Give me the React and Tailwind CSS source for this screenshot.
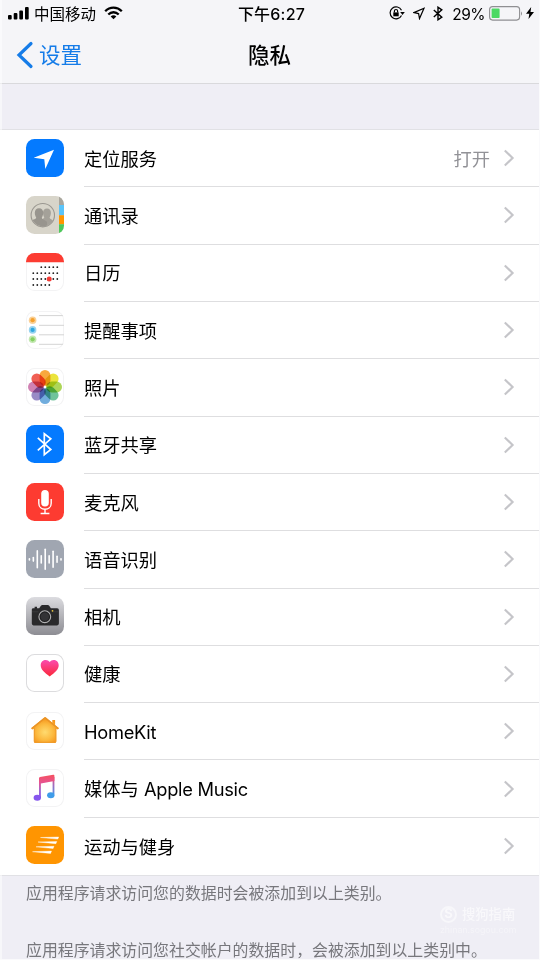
import React from "react";

function Tile({ className = "", children }) {
  return (
    <span className={`mb-0.5 block h-[38px] w-[38px] shrink-0 overflow-hidden rounded-[8.5px] ${className}`}>
      <svg viewBox="0 0 38 38" className="block h-full w-full">
        {children}
      </svg>
    </span>
  );
}

const WHITE_TILE = "bg-white shadow-[inset_0_0_0_1px_#f3f3f4]";

function LocationIcon() {
  return (
    <Tile className="bg-[#047aff]">
      <path d="M28 10.8 19.300 30 18.300 20.200 7.700 18.800Z" fill="#fff" />
    </Tile>
  );
}

function ContactsIcon() {
  return (
    <Tile className="bg-[#d8d5ca]">
      <defs>
        <clipPath id="avatar">
          <circle cx="16.800" cy="19.200" r="11.200" />
        </clipPath>
      </defs>
      <path d="M33 0h5v9h-5z" fill="#a9a69d" />
      <path d="M33 9h5v10.3h-5z" fill="#5ac4fa" />
      <path d="M33 19.3h5v9h-5z" fill="#ff9500" />
      <path d="M33 28.3h5V38h-5z" fill="#4cc95b" />
      <g clipPath="url(#avatar)">
        <path
          d="M21 12.500c2.700 0 4 1.800 3.900 4.500-.1 2-.6 3.200-1.300 4.400 0 2 3.500 2 5.400 4.600v6H16v-8l2.300-2.600c-.7-1.200-1.200-2.400-1.300-4.400-.1-2.700 1.300-4.500 4-4.500Z"
          fill="#a4a199"
        />
        <path
          d="M13 12.200c2.800 0 4.300 1.900 4.200 4.800-.1 2-.7 3.400-1.400 4.600 0 2.200 3.700 2.300 5.200 4.400v6H3v-6c1.700-2.300 7.200-2.200 7.200-4.400-.7-1.200-1.300-2.600-1.400-4.600-.1-2.900 1.400-4.800 4.200-4.800Z"
          fill="#98958e"
        />
      </g>
      <circle cx="16.800" cy="19.200" r="11.700" fill="none" stroke="#9b9891" strokeWidth="1.100" />
    </Tile>
  );
}

const CALENDAR_ROWS = [
  { y: 14.2, from: 2, to: 6 },
  { y: 20.2, from: 0, to: 6 },
  { y: 26, from: 0, to: 6 },
  { y: 32, from: 0, to: 4 },
];

function CalendarIcon() {
  return (
    <Tile className={WHITE_TILE}>
      <path d="M0 0h38v9.300H0z" fill="#fc3c32" />
      {CALENDAR_ROWS.map(({ y, from, to }) =>
        Array.from({ length: to - from + 1 }, (_, i) => (
          <circle key={`${y}_${i}`} cx={7.3 + (from + i) * 4} cy={y} r="0.9" fill="#222" />
        )),
      )}
      <circle cx="23.2" cy="26" r="2.500" fill="#f53b35" />
    </Tile>
  );
}

function RemindersIcon() {
  return (
    <Tile className={WHITE_TILE}>
      {[4.6, 14.3, 23.8, 33.3].map((y) => (
        <path key={y} d={`M13 ${y}H38`} stroke="#d4d4d4" strokeWidth="1" />
      ))}
      {[
        [9.2, "#f5a12e"],
        [18.9, "#30a7e0"],
        [28.3, "#85d060"],
      ].map(([y, color]) => (
        <g key={y} fill={color}>
          <circle cx="6.600" cy={y} r="3.800" opacity="0.5" />
          <circle cx="6.600" cy={y} r="2.100" />
        </g>
      ))}
    </Tile>
  );
}

const PETALS = ["#f79a1e", "#e8e01c", "#a0cf3c", "#58b98a", "#5a9fd8", "#8878bd", "#c96da6", "#ee4438"];

function PhotosIcon() {
  return (
    <Tile className={WHITE_TILE}>
      {PETALS.map((color, i) => (
        <rect
          key={color}
          x="13.600"
          y="2"
          width="10.800"
          height="15.800"
          rx="5.400"
          fill={color}
          opacity="0.86"
          transform={`rotate(${i * 45} 19 19)`}
          className="mix-blend-multiply"
        />
      ))}
      <circle cx="19" cy="19" r="1.200" fill="#fff" />
    </Tile>
  );
}

function BluetoothIcon() {
  return (
    <Tile className="bg-[#047aff]">
      <path d="m11.800 12.800 13 11.700-6.500 5.200V8.800l6.500 5-13 11.500" fill="none" stroke="#fff" strokeWidth="1.700" />
    </Tile>
  );
}

function MicIcon() {
  return (
    <Tile className="bg-[#fd3b31]">
      <rect x="15.200" y="7" width="7.600" height="16.500" rx="3.800" fill="#fff" />
      <path d="M12.800 16v4.300c0 8 12.400 8 12.400 0V16M19 26.500v4M14.600 30.500h8.800" fill="none" stroke="#fff" strokeWidth="1.400" />
    </Tile>
  );
}

const WAVE = [0.6, 1.8, 8.4, 3.6, 10, 3.6, 8, 3, 0.6];

function SpeechIcon() {
  return (
    <Tile className="bg-[#a0a6b1]">
      {WAVE.map((h, i) => (
        <path
          key={i}
          d={`M${3.4 + i * 3.95} ${19.3 - h}v${h * 2}`}
          stroke="#fff"
          strokeWidth="1.600"
          strokeLinecap="round"
        />
      ))}
    </Tile>
  );
}

function CameraIcon() {
  return (
    <Tile className="bg-linear-to-b from-[#dcdce0] to-[#8d8d93]">
      <path
        d="M6.800 11.200h1.800V9.800H11v1.400h2.200l1.700-2.400q.6-.8 1.500-.8h5.300q1 0 1.500.8l1.700 2.400h6.200q1.800 0 1.800 1.800v13.600q0 1.800-1.800 1.800H7.500q-1.700 0-1.700-1.800V12.400q0-1 1-1.200Z"
        fill="#29292b"
      />
      <path d="M6 14.800h6.500M26 14.800h6.500" stroke="#444447" strokeWidth="0.600" />
      <circle cx="18.800" cy="19.700" r="5.900" fill="#202022" stroke="#b0b0b2" strokeWidth="1.100" />
      <circle cx="18.800" cy="19.700" r="4.200" fill="#333336" />
      <circle cx="26.500" cy="13.800" r="0.900" fill="#e7c541" />
    </Tile>
  );
}

function HealthIcon() {
  return (
    <Tile className="bg-white shadow-[inset_0_0_0_1px_#dcdcde]">
      <defs>
        <linearGradient id="heart" x1="0" y1="0" x2="0" y2="1">
          <stop offset="0" stopColor="#fb4bb0" />
          <stop offset="1" stopColor="#fa2838" />
        </linearGradient>
      </defs>
      <path
        d="M23.700 22.400C18.500 18.600 14.700 15.400 14.700 11.200c0-5.400 6.600-7 9-3.100 2.400-3.900 9-2.300 9 3.100 0 4.200-3.800 7.400-9 11.200Z"
        fill="url(#heart)"
      />
    </Tile>
  );
}

function HomeIcon() {
  return (
    <Tile className={WHITE_TILE}>
      <defs>
        <radialGradient id="house" cx="0.5" cy="0.58" r="0.55">
          <stop offset="0" stopColor="#ffdb70" />
          <stop offset="0.55" stopColor="#fcba40" />
          <stop offset="1" stopColor="#f5931a" />
        </radialGradient>
      </defs>
      <path
        d="M18.200 5.600q.9-.7 1.800 0l6.300 5.200V8h2.800v5.200l3.700 3-.9 1.300-1.600-.7v12.700q0 1.500-1.500 1.500H9.300q-1.500 0-1.500-1.500V16.800l-1.700.7-.9-1.300Z"
        fill="url(#house)"
      />
      <path d="M5.700 16.700 19.100 5.900l13.300 10.800" fill="none" stroke="#ea9426" strokeWidth="1.500" />
      <path d="M8.400 16v13.100q0 1.200 1.200 1.200h19q1.200 0 1.200-1.200V16" fill="none" stroke="#ee9c2c" strokeWidth="1" />
    </Tile>
  );
}

function MusicIcon() {
  return (
    <Tile className={WHITE_TILE}>
      <defs>
        <linearGradient id="note" gradientUnits="userSpaceOnUse" x1="20" y1="6" x2="20" y2="32">
          <stop offset="0" stopColor="#f5515f" />
          <stop offset="0.28" stopColor="#e8538f" />
          <stop offset="0.6" stopColor="#9e68d4" />
          <stop offset="1" stopColor="#8b50ee" />
        </linearGradient>
        <linearGradient id="stem" gradientUnits="userSpaceOnUse" x1="20" y1="8" x2="20" y2="29">
          <stop offset="0" stopColor="#ec4f74" />
          <stop offset="0.4" stopColor="#a06cc0" />
          <stop offset="1" stopColor="#35a0ee" />
        </linearGradient>
      </defs>
      <path d="M26.600 8h1.800v17.500h-1.800z" fill="url(#stem)" />
      <ellipse cx="24.800" cy="26.200" rx="3.700" ry="3" fill="#3f9ce9" />
      <path d="M13 9.300q0-1 1-1.200l13.200-2.300q1.200-.2 1.200 1V12l-13.500 2.600V29H13Z" fill="url(#note)" />
      <ellipse cx="11.300" cy="28.800" rx="3.700" ry="3" fill="#8656ee" />
    </Tile>
  );
}

function FitnessIcon() {
  return (
    <Tile className="bg-[#ff9501]">
      <path
        d="m14.500 11.500 18.200-.5-.9 2.100zM12 16l18.800-.5-.9 2.200zM10 20.800l18-.5-.9 2.200zM6.500 25.700l19-.6-.9 2.300z"
        fill="#fff"
        stroke="#fff"
        strokeWidth="0.400"
      />
    </Tile>
  );
}

const ITEMS = [
  { label: "定位服务", icon: LocationIcon, value: "打开" },
  { label: "通讯录", icon: ContactsIcon },
  { label: "日历", icon: CalendarIcon },
  { label: "提醒事项", icon: RemindersIcon },
  { label: "照片", icon: PhotosIcon },
  { label: "蓝牙共享", icon: BluetoothIcon },
  { label: "麦克风", icon: MicIcon },
  { label: "语音识别", icon: SpeechIcon },
  { label: "相机", icon: CameraIcon },
  { label: "健康", icon: HealthIcon },
  { label: "", latin: "HomeKit", icon: HomeIcon },
  { label: "媒体与 ", latin: "Apple Music", icon: MusicIcon },
  { label: "运动与健身", icon: FitnessIcon },
];

function StatusBar() {
  return (
    <div className="grid h-7 grid-cols-[1fr_auto_1fr] items-center text-[15.500px] leading-6">
      <div className="flex items-center pl-2">
        <svg width="21" height="13" viewBox="0 0 21 13" className="mb-px shrink-0">
          <rect x="0" y="8" width="3.700" height="4.500" rx="1" />
          <rect x="5.700" y="6" width="3.700" height="6.500" rx="1" />
          <rect x="11.300" y="3.500" width="3.700" height="9" rx="1" />
          <rect x="17" y="0" width="3.700" height="12.500" rx="1" />
        </svg>
        <span className="ml-[5px] pt-px">中国移动</span>
        <svg width="19" height="14" viewBox="0 0 19 14" fill="none" stroke="#000" strokeWidth="2.300" className="mb-0.5 ml-2">
          <path d="M1.200 5.200c4.700-4.700 11.900-4.700 16.600 0" />
          <path d="M4.300 8.500c3-3 7.400-3 10.400 0" />
          <path d="m9.500 13.200-2.800-2.800c1.600-1.500 4-1.500 5.600 0Z" fill="#000" stroke="none" />
        </svg>
      </div>
      <div className="pl-1 text-[16px] font-medium tracking-[0.2px]">下午6:27</div>
      <div className="flex items-center justify-end pr-[5px]">
        <svg width="16" height="14" viewBox="0 0 16 14" fill="none" stroke="#000" strokeWidth="1.200" className="mb-0.5">
          <path d="M12.500 4.200A6 6 0 1 0 12.500 9.500" />
          <path d="M11.200 6h4.600l-2.300 3Z" fill="#000" stroke="none" />
          <path d="M4.300 6.400h5.400v3.900H4.300z" fill="#000" stroke="none" />
          <path d="M5.400 6.500V5c0-2 3.200-2 3.200 0v1.500" />
        </svg>
        <svg width="12" height="13" viewBox="0 0 12 13" fill="none" stroke="#000" strokeWidth="1.200" className="mb-px ml-2">
          <path d="M11 1.300.9 5.600l4.700 1 .9 5Z" strokeLinejoin="miter" />
        </svg>
        <svg width="10" height="15" viewBox="0 0 10 15" fill="none" stroke="#000" strokeWidth="1.400" className="mb-px ml-2">
          <path d="m.8 4 8 7.200-3.800 2.600V1.200l3.800 2.600-8 7.200" />
        </svg>
        <span className="ml-[9px] pt-px text-[15.500px] tracking-[-0.5px]">29%</span>
        <svg width="34" height="15" viewBox="0 0 34 15" className="mb-px ml-1">
          <rect x="0.600" y="0.600" width="30" height="13.500" rx="3" fill="none" stroke="#8f8f92" strokeWidth="1.100" />
          <rect x="2.600" y="2.600" width="8" height="9.500" rx="0.800" fill="#4cd964" />
          <path d="M32 5.200q2 2.300 0 4.500Z" fill="#8f8f92" />
        </svg>
        <svg width="8" height="12" viewBox="0 0 8 12" className="mb-0.5 ml-[3px]">
          <path d="M5.200 0 0 6.800h3.300L2.500 12 8 4.900H4.500Z" />
        </svg>
      </div>
    </div>
  );
}

function NavBar() {
  return (
    <div className="grid h-[54px] grid-cols-3 items-center">
      <div className="flex items-center pl-4 text-[21.500px] text-[#157ce8]">
        <svg width="18" height="28" viewBox="0 0 18 28" fill="none" stroke="#157ce8" strokeWidth="3.200" strokeLinecap="round">
          <path d="M15 2.500 3 14l12 11.500" />
        </svg>
        <span className="ml-[5px] leading-7">设置</span>
      </div>
      <h1 className="text-center text-[21.500px] leading-7 font-medium">隐私</h1>
    </div>
  );
}

function Row({ label, latin, icon: Icon, value, last }) {
  return (
    <li className="flex flex-1 items-center pl-[26px]">
      <Icon />
      <div
        className={`ml-5 flex flex-1 items-center self-stretch pr-6 ${last ? "" : "border-b border-[#dedee0]"}`}
      >
        <span className="flex-1 pt-px text-[18.300px] leading-6">
          {label}
          {latin ? <span className="tracking-[-0.3px]">{latin}</span> : null}
        </span>
        {value ? <span className="mr-[13px] pt-px text-[18.300px] leading-6 text-[#929297]">{value}</span> : null}
        <svg width="12" height="18" viewBox="0 0 12 18" fill="none" stroke="#c5c5c9" strokeWidth="2.100">
          <path d="m1.800 1.500 7.800 7.500-7.800 7.500" />
        </svg>
      </div>
    </li>
  );
}

function Watermark() {
  return (
    <div className="absolute top-[904px] left-[440px] text-white/60">
      <div className="flex items-center gap-[5px]">
        <span className="flex h-[17px] w-[17px] items-center justify-center rounded-full border-2 border-white/50 text-[13px] font-bold">
          S
        </span>
        <span className="text-[13.300px] leading-5 font-medium">搜狗指南</span>
      </div>
      <div className="text-[8.800px] leading-3 text-white/40">zhinan.sogou.com</div>
    </div>
  );
}

export default function App() {
  return (
    <div className="relative flex h-[960px] w-[540px] flex-col overflow-hidden border-r border-b border-[#fafafc] bg-[#efeef5] font-['Inter','Noto_Sans_CJK_SC',sans-serif] text-black">
      <header className="h-[84px] shrink-0 border-b border-[#d9d9dc] bg-[#f5f5f8]">
        <StatusBar />
        <NavBar />
      </header>

      <ul className="mt-[45px] flex h-[747px] shrink-0 flex-col border-y border-[#e1e1e5] bg-white">
        {ITEMS.map((item, i) => (
          <Row key={i} {...item} last={i === ITEMS.length - 1} />
        ))}
      </ul>

      <footer className="space-y-[33px] pt-1.5 pl-[26px] text-[15.900px] leading-6 whitespace-nowrap text-[#77777c]">
        <p>应用程序请求访问您的数据时会被添加到以上类别。</p>
        <p>应用程序请求访问您社交帐户的数据时，会被添加到以上类别中。</p>
      </footer>

      <div className="absolute top-0 left-0 h-full w-0.5 bg-white/50" />
      <Watermark />
    </div>
  );
}
